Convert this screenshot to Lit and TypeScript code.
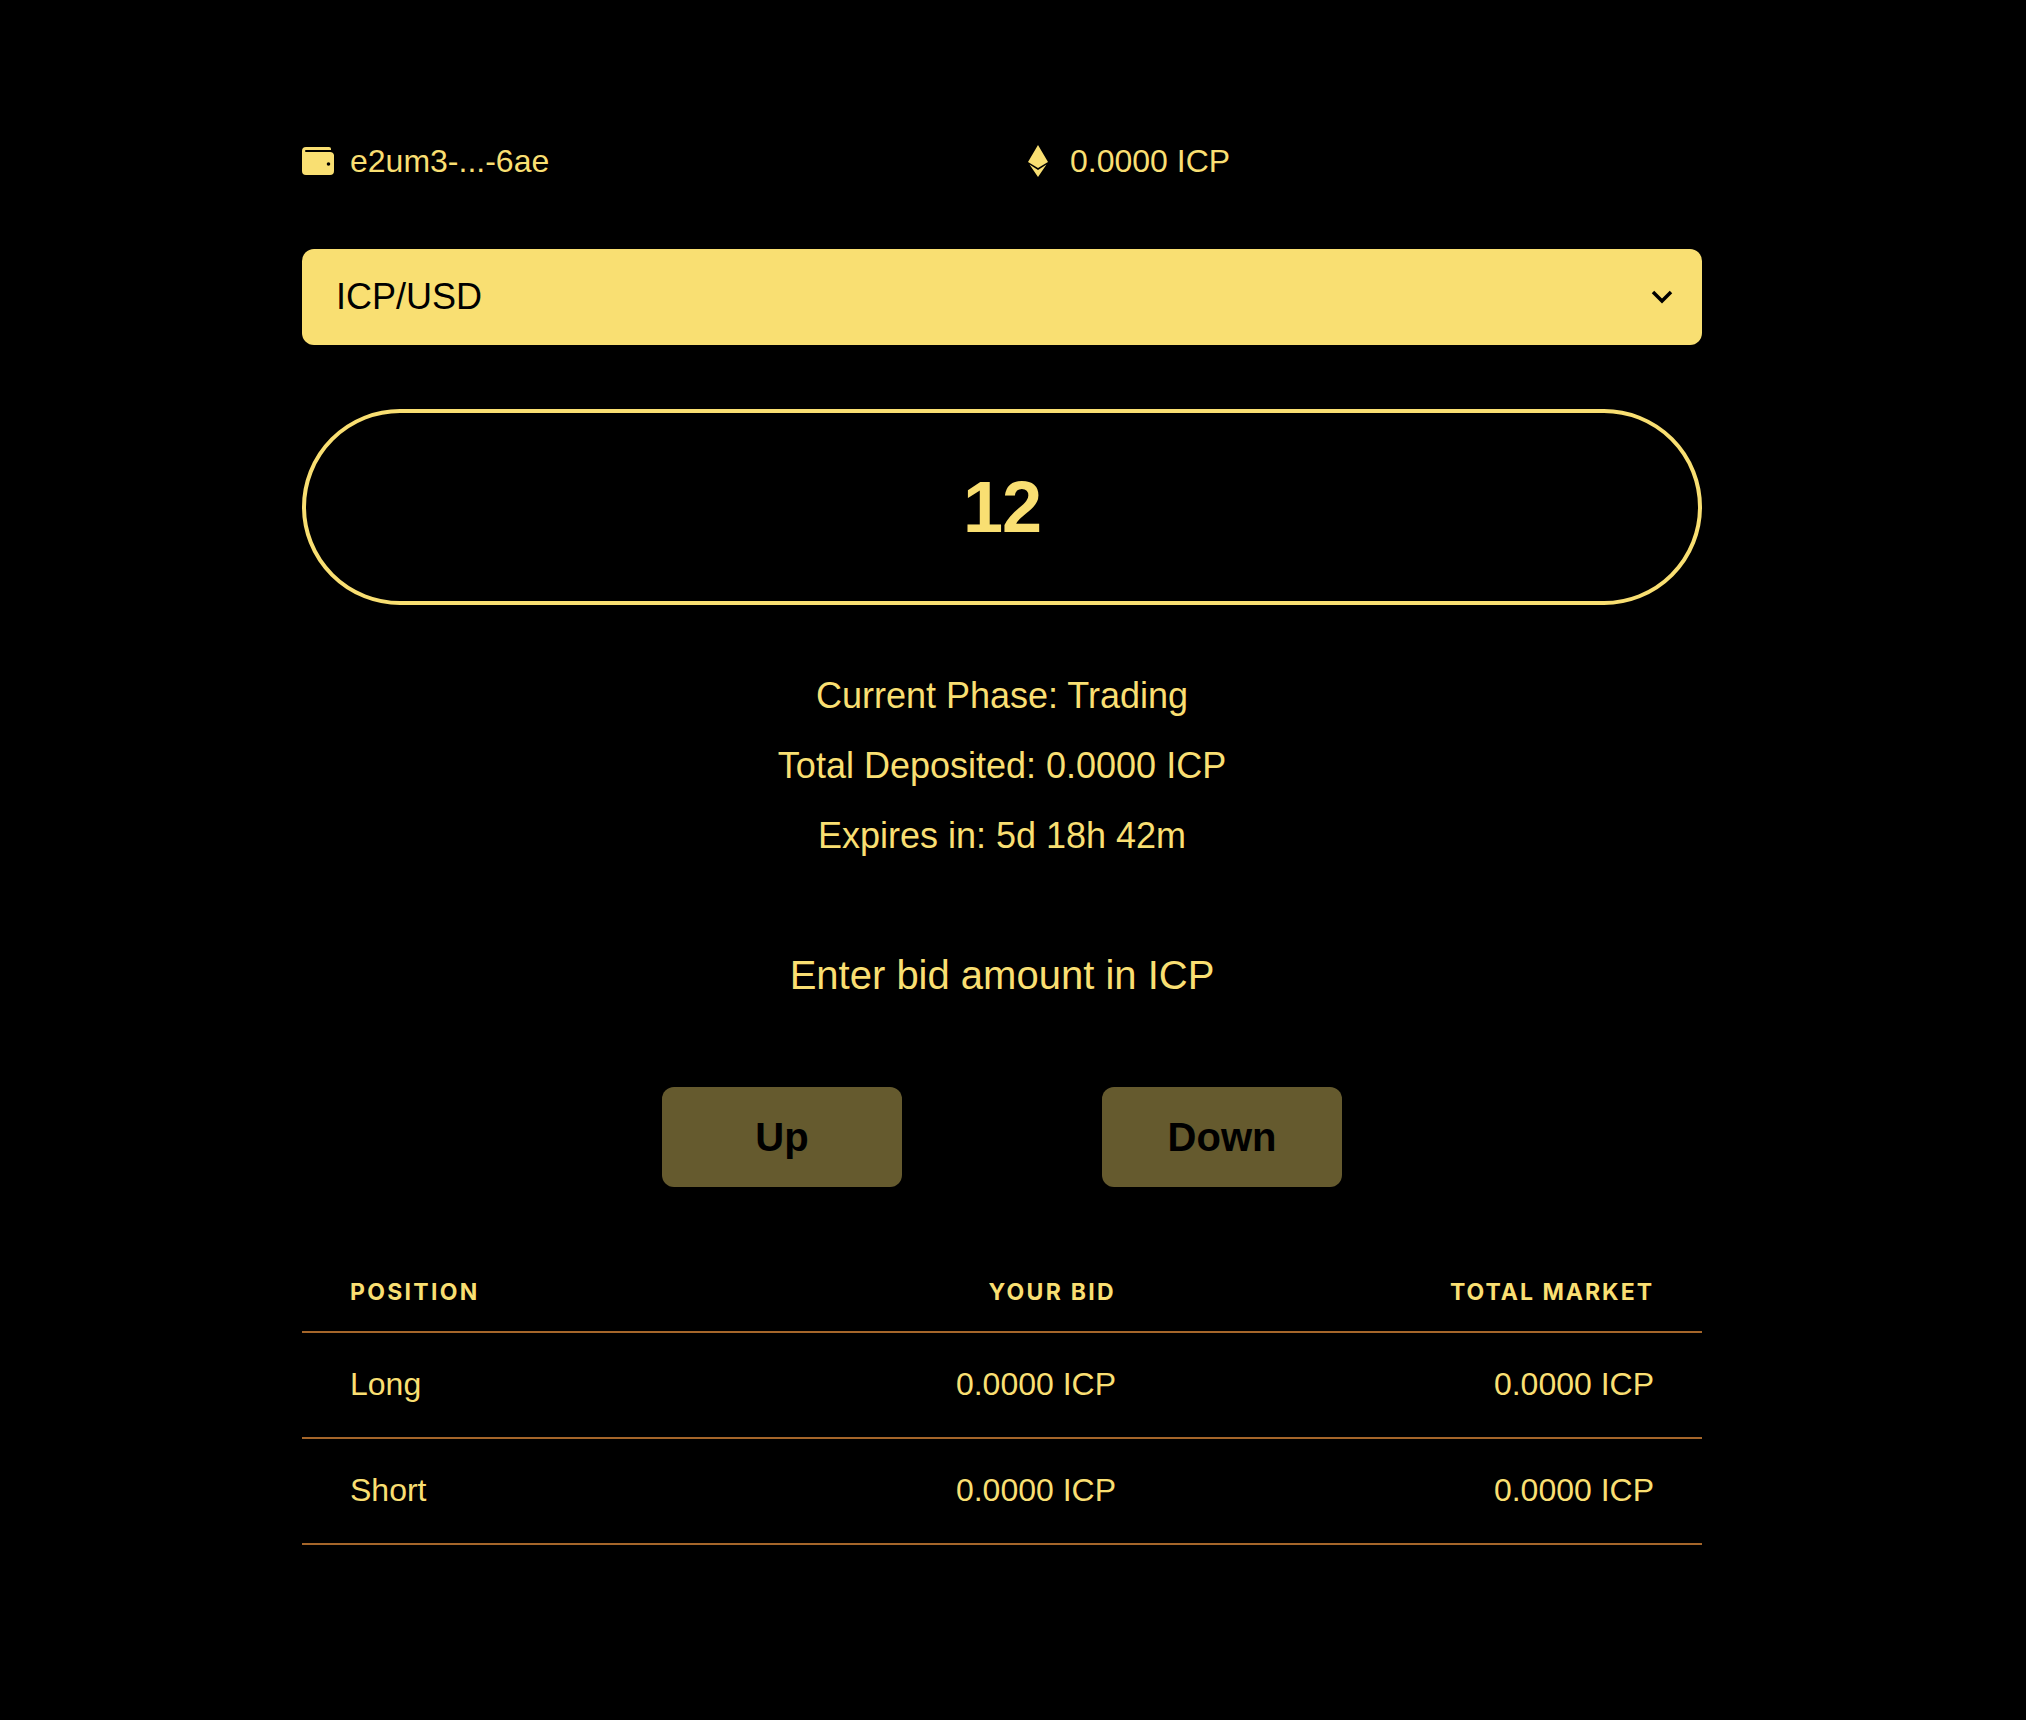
import { LitElement, html, css } from "lit";
import { customElement } from "lit/decorators.js";

const rows = [
  { pos: "Long", bid: "0.0000 ICP", total: "0.0000 ICP" },
  { pos: "Short", bid: "0.0000 ICP", total: "0.0000 ICP" },
];

@customElement("app-root")
export class AppRoot extends LitElement {
  static styles = css`
    :host {
      display: block;
      min-height: 1720px;
      background: #000;
      color: #f9df72;
      font-family: "Liberation Sans", Arial, sans-serif;
      box-sizing: border-box;
      padding: 137px 0 0 302px;
    }
    .wrap {
      width: 1400px;
      display: flex;
      flex-direction: column;
    }
    .top {
      display: grid;
      grid-template-columns: 1fr 1fr;
      height: 48px;
      align-items: center;
      font-size: 32px;
    }
    .top > div {
      display: flex;
      align-items: center;
      gap: 16px;
    }
    .top svg {
      display: block;
    }
    .balance {
      padding-left: 26px;
    }
    .balance span {
      margin-left: 6px;
    }
    .select {
      margin-top: 64px;
      height: 96px;
      border-radius: 12px;
      background: #f9df72;
      color: #000;
      display: flex;
      align-items: center;
      justify-content: space-between;
      padding: 0 29px 0 34px;
      font-size: 36px;
    }
    .pill {
      margin-top: 64px;
      height: 196px;
      box-sizing: border-box;
      border: 4px solid #f9df72;
      border-radius: 98px;
      display: flex;
      align-items: center;
      justify-content: center;
      font-size: 72px;
      font-weight: 700;
      letter-spacing: -1px;
    }
    .info {
      margin-top: 67px;
      display: flex;
      flex-direction: column;
      align-items: center;
      gap: 22px;
      font-size: 36px;
      line-height: 48px;
    }
    .prompt {
      margin-top: 91px;
      text-align: center;
      font-size: 40px;
      line-height: 48px;
    }
    .actions {
      margin-top: 88px;
      display: flex;
      justify-content: center;
      gap: 200px;
    }
    .actions button {
      width: 240px;
      height: 100px;
      border: none;
      border-radius: 12px;
      background: #655a2e;
      color: #000;
      font: 700 40px "Liberation Sans", Arial, sans-serif;
    }
    table {
      margin-top: 68px;
      width: 100%;
      border-collapse: collapse;
      table-layout: fixed;
    }
    th,
    td {
      padding: 0 48px;
      text-align: right;
      border-bottom: 2px solid #a5662a;
    }
    th:first-child,
    td:first-child {
      text-align: left;
    }
    th {
      height: 74px;
      padding-bottom: 2px;
      font-family: Inter, "Liberation Sans", sans-serif;
      font-size: 23px;
      font-weight: 700;
      letter-spacing: 2.3px;
      text-transform: uppercase;
    }
    th:nth-child(2) {
      width: 320px;
    }
    th:nth-child(3) {
      width: 442px;
      letter-spacing: 2px;
    }
    td {
      height: 103px;
      padding-bottom: 1px;
      font-size: 32px;
    }
  `;

  render() {
    return html`
      <div class="wrap">
        <div class="top">
          <div>
            <svg width="32" height="28" viewBox="0 0 32 28">
              <path
                fill="#f9df72"
                fill-rule="evenodd"
                d="M4 0h23a2 2 0 0 1 2 2v1H4a1 1 0 0 0 0 2h24a4 4 0 0 1 4 3v16a4 4 0 0 1-4 4H4a4 4 0 0 1-4-4V4a4 4 0 0 1 4-4zm22.500 15.200a1.800 1.800 0 1 0 0 3.600 1.800 1.800 0 0 0 0-3.600z"
              />
            </svg>
            <span>e2um3-...-6ae</span>
          </div>
          <div class="balance">
            <svg width="20" height="32" viewBox="0 0 20 32">
              <path fill="#f9df72" d="M10 0l10 17-10 6-10-6zM1.500 19.500l8.500 5.500 8.500-5.500-8.500 12.500z" />
            </svg>
            <span>0.0000 ICP</span>
          </div>
        </div>
        <div class="select">
          <span>ICP/USD</span>
          <svg width="22" height="14" viewBox="0 0 22 14">
            <path d="M2 2l9 9 9-9" fill="none" stroke="#000" stroke-width="3.500" />
          </svg>
        </div>
        <div class="pill">12</div>
        <div class="info">
          <div>Current Phase: Trading</div>
          <div>Total Deposited: 0.0000 ICP</div>
          <div>Expires in: 5d 18h 42m</div>
        </div>
        <div class="prompt">Enter bid amount in ICP</div>
        <div class="actions">
          <button>Up</button>
          <button>Down</button>
        </div>
        <table>
          <thead>
            <tr><th>Position</th><th>Your bid</th><th>Total market</th></tr>
          </thead>
          <tbody>
            ${rows.map(
              (r) => html`<tr><td>${r.pos}</td><td>${r.bid}</td><td>${r.total}</td></tr>`
            )}
          </tbody>
        </table>
      </div>
    `;
  }
}
